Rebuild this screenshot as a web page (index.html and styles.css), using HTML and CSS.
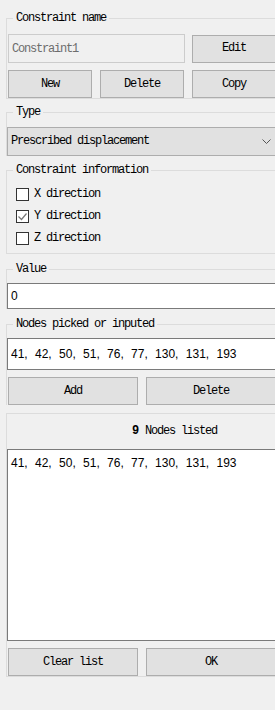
FILE: index.html
```html
<!DOCTYPE html>
<html lang="en">
<head>
    <meta charset="UTF-8">
    <meta name="viewport" content="width=device-width, initial-scale=1.0">
    <title>Constraint</title>
    <link rel="stylesheet" href="styles.css">
</head>
<body>
<div class="panel">
    <!-- name -->
    <fieldset class="grp g-name">
        <legend>Constraint name</legend>
        <div class="row r-name">
            <input class="txt txt-off" type="text" value="Constraint1" readonly>
            <button class="btn b-edit">Edit</button>
        </div>
        <div class="row r-btns">
            <button class="btn b3">New</button>
            <button class="btn b3">Delete</button>
            <button class="btn b3">Copy</button>
        </div>
    </fieldset>

    <!-- type -->
    <fieldset class="grp g-type">
        <legend>Type</legend>
        <div class="combo">
            <span>Prescribed displacement</span>
            <svg class="chev" width="9" height="5" viewBox="0 0 9 5"><path d="M0.5 0.5 L4.5 4.5 L8.5 0.5" fill="none" stroke="#555" stroke-width="1"/></svg>
        </div>
    </fieldset>

    <!-- info -->
    <fieldset class="grp g-info">
        <legend>Constraint information</legend>
        <div class="chk"><span class="box"></span>X direction</div>
        <div class="chk"><span class="box"><svg width="11" height="11" viewBox="0 0 11 11"><path d="M1.5 5.5 L4.5 8.5 L9.5 2.5" fill="none" stroke="#777" stroke-width="1.2"/></svg></span>Y direction</div>
        <div class="chk"><span class="box"></span>Z direction</div>
    </fieldset>

    <!-- value -->
    <fieldset class="grp g-val">
        <legend>Value</legend>
        <input class="txt txt-val" type="text" value="0">
    </fieldset>

    <!-- nodes -->
    <fieldset class="grp g-nodes">
        <legend>Nodes picked or inputed</legend>
        <input class="txt txt-nodes" type="text" value="41, 42, 50, 51, 76, 77, 130, 131, 193">
        <div class="row r-btns2">
            <button class="btn b2">Add</button>
            <button class="btn b2">Delete</button>
        </div>
    </fieldset>

    <!-- list -->
    <div class="grp g-list">
        <div class="list-head"><b>9</b> Nodes listed</div>
        <div class="listbox">41, 42, 50, 51, 76, 77, 130, 131, 193</div>
        <div class="row r-btns3">
            <button class="btn b2">Clear list</button>
            <button class="btn b2">OK</button>
        </div>
    </div>
</div>
</body>
</html>
```

FILE: styles.css
```css
* {margin:0; padding:0; box-sizing:border-box;}
body {background:#f0f0f0; overflow:hidden; font:12px/13px "Liberation Mono", monospace; color:#000; letter-spacing:-1.2px;}
.panel {width:300px; padding-left:6px;}

/* group box */
.grp {border:1px solid #dcdcdc; padding:0 0 0 1px; min-width:0;}
.grp legend {margin-left:5px; padding:0 3px; line-height:13px;}
.g-name {margin-top:12px;}
.g-type {margin-top:7px; border-bottom:none;}
.g-info {margin-top:8px; padding-top:6px; padding-bottom:4px;}
.g-val {margin-top:9px; border-bottom:none;}
.g-nodes {margin-top:9px; border-bottom:none;}
.g-list {margin-top:8px; padding-left:0;}

.row {display:flex; gap:8px; align-items:center;}

/* buttons */
.btn {font:inherit; letter-spacing:inherit; background:#e1e1e1; border:1px solid #adadad; color:#000; height:28px;}
.b3 {width:84px;}
.b2 {width:130px;}
.b-edit {width:84px;}

/* text fields */
.txt {display:block; font:12px "Liberation Sans", sans-serif; letter-spacing:0; word-spacing:4px; background:#fff; border:1px solid #7a7a7a; padding:0 3px; outline:none; color:#000;}
.txt-off {background:#f0f0f0; border-color:#cccccc; color:#6d6d6d; width:177px; height:29px; font:12px/13px "Liberation Mono", monospace; letter-spacing:-1.2px;}
.r-name {margin-top:9px; gap:7px;}
.r-btns {margin-top:7px;}
.txt-val {margin:7px 0 0 -1px; width:290px; height:26px;}
.txt-nodes {margin:7px 0 0 -1px; width:290px; height:32px;}
.r-btns2 {margin-top:7px;}

/* combo */
.combo {margin:8px 0 0 -1px; height:29px; width:290px; background:#e1e1e1; border:1px solid #adadad; display:flex; align-items:center; padding-left:3px;}
.chev {margin-left:auto; margin-right:25px;}

/* checkboxes */
.chk {display:flex; height:22px; align-items:center; padding-left:8px;}
.box {width:13px; height:13px; border:1px solid #333; background:#fff; margin-right:5px; display:flex; align-items:center; justify-content:center;}

/* list panel */
.list-head {height:35px; display:flex; align-items:center; padding-left:125px;}
.list-head b {margin-right:7px;}
.listbox {height:192px; background:#fff; border:1px solid #7a7a7a; font:12px "Liberation Sans", sans-serif; letter-spacing:0; word-spacing:4px; padding:6px 3px;}
.r-btns3 {margin-top:7px; padding-left:1px;}
```
